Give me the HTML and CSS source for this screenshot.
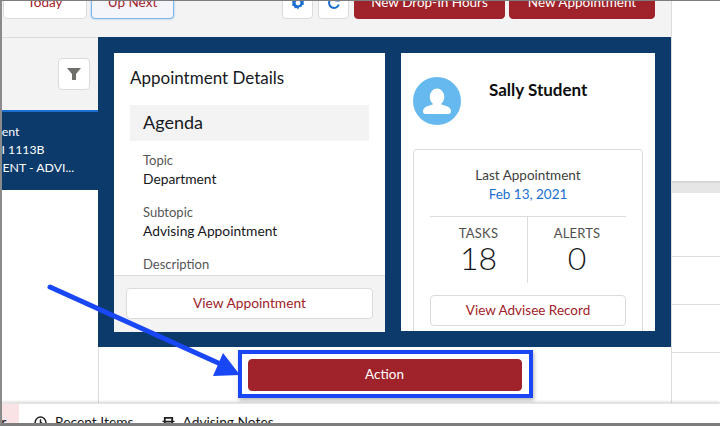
FILE: index.html
```html
<!DOCTYPE html>
<html lang="en">
<head>
<meta charset="utf-8">
<title>Advising Appointments</title>
<link rel="stylesheet" href="styles.css">
</head>
<body>
<div class="frame">
  <div class="toolbar">
    <div class="tb-left">
      <button class="btn tab today">Today</button>
      <button class="btn tab tab-active">Up Next</button>
    </div>
    <div class="tb-right">
      <button class="btn icon-btn">
        <svg viewBox="0 0 14 14" width="14" height="14"><path class="i-blue" fill-rule="evenodd" d="M7 .5l1.3 1.6 2-.4.7 2 2 .8-.5 2 .5 2-2 .8-.7 2-2-.4L7 13.500l-1.300-1.600-2 .4-.7-2-2-.8.500-2-.5-2 2-.8.7-2 2 .4zM7 4.600a2.400 2.400 0 100 4.800 2.400 2.400 0 000-4.800z"/></svg>
      </button>
      <button class="btn icon-btn">
        <svg viewBox="0 0 14 14" width="14" height="14"><path class="i-stroke" d="M11.800 8.500A5 5 0 1 1 10.600 3.400"/><path class="i-blue" d="M8 5.500h5v-5z"/></svg>
      </button>
      <button class="btn primary drop">New Drop-In Hours</button>
      <button class="btn primary appt">New Appointment</button>
    </div>
  </div>
  <div class="main">
    <aside class="list">
      <div class="filter-bar">
        <button class="btn filter">
          <svg viewBox="0 0 14 14" width="14" height="14"><path class="i-gray" d="M0 1h14L9 7v6H5V7z"/></svg>
        </button>
      </div>
      <div class="list-item">
        <div class="li-a">ident</div>
        <div class="li-b">II 1113B</div>
        <div class="li-c">MENT - ADVI...</div>
      </div>
    </aside>
    <div class="center">
      <section class="panel">
        <article class="card details">
          <div class="details-body">
            <h2 class="details-title">Appointment Details</h2>
            <div class="agenda">Agenda</div>
            <dl class="fields">
              <dt>Topic</dt><dd>Department</dd>
              <dt>Subtopic</dt><dd>Advising Appointment</dd>
              <dt>Description</dt>
            </dl>
          </div>
          <div class="details-foot">
            <button class="btn outline wide">View Appointment</button>
          </div>
        </article>
        <article class="card person">
          <header class="person-head">
            <svg class="avatar" viewBox="0 0 48 48" width="48" height="48"><circle cx="24" cy="24" r="24" fill="#65b9ef"/><ellipse cx="24" cy="20" rx="7.300" ry="8.500" fill="#fff"/><path fill="#fff" d="M10 34.500c0-3 2-4.500 5-5.500 3-1 5-1.500 5-2h8c0 .5 2 1 5 2s5 2.500 5 5.500c0 1.500-1 2.500-2.500 2.500h-23C11 37 10 36 10 34.500z"/></svg>
            <div class="person-name">Sally Student</div>
          </header>
          <div class="summary">
            <div class="last">
              <div class="last-label">Last Appointment</div>
              <div class="last-date">Feb 13, 2021</div>
            </div>
            <div class="stats">
              <div class="stat"><div class="stat-label">TASKS</div><div class="stat-num">18</div></div>
              <div class="stat"><div class="stat-label">ALERTS</div><div class="stat-num">0</div></div>
            </div>
            <button class="btn outline record">View Advisee Record</button>
          </div>
        </article>
      </section>
      <div class="action-row">
        <div class="highlight">
          <button class="btn primary action">Action</button>
        </div>
      </div>
    </div>
    <aside class="side">
      <div class="side-top"></div>
      <div class="side-band"></div>
      <div class="side-row r1"></div>
      <div class="side-row r2"></div>
      <div class="side-row r2"></div>
      <div class="side-rest"></div>
    </aside>
  </div>
  <footer class="dock">
    <div class="dock-tab">er</div>
    <div class="dock-item">
      <svg viewBox="0 0 14 14" width="13" height="13"><circle class="i-dark" cx="7" cy="7" r="5.800"/><path class="i-dark" d="M7 3.500V7l2.500 1.500"/></svg>
      <span>Recent Items</span>
    </div>
    <div class="dock-item">
      <svg viewBox="0 0 14 14" width="13" height="13"><path fill="#222" fill-rule="evenodd" d="M2 1h10v12h-2v-1H4v1H2zM4 3v2h6V3zM4 7v3h6V7z"/><path fill="#222" d="M.5 5H3v1.500H.5zM11 5h2.500v1.500H11z"/></svg>
      <span>Advising Notes</span>
    </div>
  </footer>
  <svg class="arrow" viewBox="0 0 720 426" width="720" height="426">
    <path d="M50 287L226 366.500" stroke="#1a47f5" stroke-width="5" stroke-linecap="round" fill="none"/>
    <path d="M223 353L240 375 213 376z" fill="#1a47f5"/>
  </svg>
</div>
</body>
</html>
```
FILE: styles.css
```css
* { box-sizing: border-box; margin: 0; padding: 0; }
html, body { width: 720px; height: 426px; overflow: hidden; background: #fff; }
body { font-family: "Lato", "Liberation Sans", sans-serif; color: #16181c; }
button { font-family: inherit; }

.frame {
  position: relative;
  width: 720px;
  height: 426px;
  overflow: hidden;
  border-top: 1px solid #7d7d7d;
  border-left: 2px solid #8a8a8a;
  border-bottom: 3px solid #7d7d7d;
  display: flex;
  flex-direction: column;
}

.toolbar {
  flex: none;
  height: 36px;
  width: 670px;
  background: #f3f3f3;
  border-right: 1px solid #dcdcdc;
  display: flex;
  justify-content: space-between;
  padding: 0 16px 0 1px;
}
.tb-left, .tb-right { display: flex; align-items: flex-start; margin-top: -14px; }
.tb-left { gap: 4px; }
.tb-right { gap: 5px; }

.btn {
  height: 32px;
  border-radius: 4px;
  border: 1px solid #dddbda;
  background: #fff;
  font-size: 13.500px;
  padding-bottom: 2px;
  display: flex;
  align-items: center;
  justify-content: center;
  white-space: nowrap;
}
.icon-btn, .filter { padding-bottom: 0; }
.tab { width: 83px; color: #a0222a; }
.today { width: 84px; }
.tab-active { background: #f3f5fa; border-color: #7db6ea; color: #a0222a; box-shadow: 0 0 2px #7db6ea; }
.icon-btn { width: 31px; }
.primary { background: #a0222a; border-color: #a0222a; color: #fff; }
.drop { width: 151px; }
.appt { width: 146px; margin-left: -1px; }

.i-blue { fill: #1b6fd0; }
.i-stroke { fill: none; stroke: #1b6fd0; stroke-width: 2; }
.i-gray { fill: #706e6b; }
.i-dark { fill: none; stroke: #222; stroke-width: 1.600; }

.main { flex: 1; min-height: 0; display: flex; }

.list { flex: none; width: 96px; display: flex; flex-direction: column; }
.filter-bar {
  flex: none;
  height: 75px;
  background: #f3f3f3;
  border-top: 1px solid #dcdcdc;
  border-bottom: 2px solid #1b6fd0;
  display: flex;
  justify-content: flex-end;
  padding: 20px 8px 0 0;
}
.filter { width: 32px; height: 32px; }
.list-item {
  flex: none;
  height: 78px;
  background: #0b3a6b;
  color: #fff;
  font-size: 12.300px;
  line-height: 18px;
  padding-top: 11px;
  overflow: hidden;
  white-space: nowrap;
}
.li-a { text-indent: -10px; }
.li-b { text-indent: -4px; }
.li-c { text-indent: -11px; }

.center { flex: none; width: 573px; display: flex; flex-direction: column; }
.panel {
  flex: none;
  height: 310px;
  background: #0b3a6b;
  padding: 16px;
  display: flex;
  gap: 16px;
}
.card { background: #fff; overflow: hidden; }

.details { width: 271px; height: 279px; display: flex; flex-direction: column; }
.details-body { flex: 1; min-height: 0; overflow: hidden; padding: 0 16px; }
.details-title { font-size: 17px; font-weight: 400; line-height: 22px; margin-top: 14px; color: #16181c; }
.agenda {
  height: 36px;
  margin-top: 16px;
  background: #f3f3f3;
  padding-left: 13px;
  font-size: 18px;
  line-height: 35px;
}
.fields { padding: 10px 0 0 13px; }
.fields dt { font-size: 13px; line-height: 18px; color: #565656; }
.fields dd { font-size: 13.800px; line-height: 19px; margin-bottom: 15px; }
.details-foot {
  flex: none;
  height: 57px;
  background: #f3f3f3;
  border-top: 1px solid #dcdcdc;
  padding: 12px 12px 0;
}
.outline { color: #a0222a; background: #fff; height: 31px; }
.wide { width: 247px; font-size: 13.800px; }

.person { width: 254px; height: 278px; padding: 24px 12px 0; display: flex; flex-direction: column; }
.person-head { flex: none; height: 72px; display: flex; }
.person-name { font-size: 17px; font-weight: 700; line-height: 18px; margin: 4px 0 0 28px; color: #0d0d0d; }
.avatar { flex: none; }
.summary {
  flex: none;
  height: 200px;
  border: 1px solid #dcdcdc;
  border-radius: 4px;
  padding: 0 16px;
}
.last { height: 66px; padding-top: 16px; text-align: center; font-size: 13.500px; line-height: 19px; }
.last-label { color: #3e3e3c; }
.last-date { color: #1b6fd0; }
.stats { height: 67px; border-top: 1px solid #dcdcdc; display: grid; grid-template-columns: 97px 1fr; }
.stat { text-align: center; padding-top: 8px; }
.stat + .stat { border-left: 1px solid #dcdcdc; }
.stat-label { font-size: 13px; line-height: 16px; color: #514f4d; letter-spacing: .2px; }
.stat-num { font-size: 32px; font-weight: 300; line-height: 33px; color: #16181c; }
.record { width: 196px; margin-top: 12px; }

.action-row {
  flex: 1;
  border-left: 1px solid #dcdcdc;
  display: flex;
  justify-content: center;
  padding-top: 3px;
}
.highlight {
  width: 295px;
  height: 48px;
  border: 4px solid #1a47f5;
  padding: 5px 6px;
  background: #fff;
  box-shadow: 1px 2px 4px rgba(0, 0, 0, .3);
}
.action { width: 274px; height: 32px; border-radius: 4px; }

.side { flex: 1; min-width: 0; border-left: 1px solid #dcdcdc; display: flex; flex-direction: column; }
.side-top { flex: none; height: 144px; }
.side-band { flex: none; height: 12px; background: #e6e6e6; border-top: 2px solid #d6d6d6; }
.side-row { flex: none; border-bottom: 1px solid #dcdcdc; }
.r1 { height: 64px; }
.r2 { height: 48px; }
.side-rest { flex: 1; }

.dock {
  flex: none;
  height: 20px;
  background: #fff;
  border-top: 1px solid #e4e4e4;
  box-shadow: 0 -1px 3px rgba(0, 0, 0, .18);
  display: flex;
  overflow: hidden;
  position: relative;
  font-size: 13.800px;
  color: #16181c;
}
.dock-tab { width: 17px; background: #f9e3e5; padding-top: 9px; line-height: 18px; text-indent: -8px; white-space: nowrap; overflow: hidden; flex: none; }
.dock-item { display: flex; align-items: flex-start; gap: 8px; padding-top: 9px; line-height: 18px; white-space: nowrap; }
.dock-item svg { margin-top: 3px; flex: none; }
.dock-tab + .dock-item { margin-left: 15px; }
.dock-item + .dock-item { margin-left: 28px; }

.arrow { position: absolute; left: -2px; top: -1px; pointer-events: none; }
```
